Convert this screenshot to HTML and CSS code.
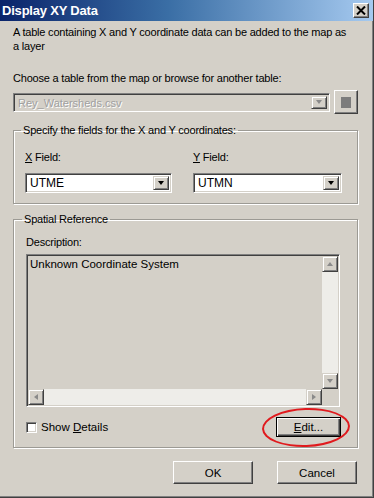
FILE: index.html
```html
<!DOCTYPE html>
<html>
<head>
<meta charset="utf-8">
<link rel="stylesheet" href="styles.css">
</head>
<body>
<div class="window">
  <div class="titlebar">
    <span class="title">Display XY Data</span>
    <span class="close"><svg width="10" height="9" viewBox="0 0 10 9"><path d="M1 0.5 L9 8.5 M9 0.5 L1 8.5" stroke="#000" stroke-width="2"/></svg></span>
  </div>
  <div class="content">
    <p class="intro">A table containing X and Y coordinate data can be added to the map as<br>a layer</p>
    <p class="choose">Choose a table from the map or browse for another table:</p>
    <div class="table-row">
      <div class="combo disabled">
        <span class="combo-text">Rey_Watersheds.csv</span>
        <span class="arrow-btn"><span class="tri-down grey"></span></span>
      </div>
      <div class="browse"><span class="browse-sq"></span></div>
    </div>

    <fieldset class="group fields">
      <legend>Specify the fields for the X and Y coordinates:</legend>
      <div class="field-grid">
        <div class="field-label"><u>X</u> Field:</div>
        <div class="field-label"><u>Y</u> Field:</div>
        <div class="combo">
          <span class="combo-text">UTME</span>
          <span class="arrow-btn"><span class="tri-down"></span></span>
        </div>
        <div class="combo">
          <span class="combo-text">UTMN</span>
          <span class="arrow-btn"><span class="tri-down"></span></span>
        </div>
      </div>
    </fieldset>

    <fieldset class="group spatial">
      <legend>Spatial Reference</legend>
      <div class="desc-label">Description:</div>
      <div class="desc">
        <div class="desc-text">Unknown Coordinate System</div>
        <div class="vscroll">
          <span class="sb-btn"><span class="tri-up grey"></span></span>
          <span class="sb-track"></span>
          <span class="sb-btn"><span class="tri-down grey"></span></span>
        </div>
        <div class="hscroll">
          <span class="sb-btn"><span class="tri-left grey"></span></span>
          <span class="sb-track"></span>
          <span class="sb-btn"><span class="tri-right grey"></span></span>
        </div>
        <div class="corner"></div>
      </div>
      <div class="detail-row">
        <label class="check"><span class="checkbox"></span><span>Show <u>D</u>etails</span></label>
        <div class="edit-wrap">
          <div class="btn default"><u>E</u>dit...</div>
          <span class="ring"></span>
        </div>
      </div>
    </fieldset>

    <div class="footer">
      <div class="btn">OK</div>
      <div class="btn">Cancel</div>
    </div>
  </div>
</div>
</body>
</html>
```

FILE: styles.css
```css
* { box-sizing: border-box; }
html, body { margin: 0; padding: 0; }
body {
  width: 374px;
  height: 498px;
  background: #d4d0c8;
  font-family: "Liberation Sans", Arial, sans-serif;
  font-size: 11px;
  letter-spacing: -0.2px;
  color: #000;
  overflow: hidden;
}
.window {
  width: 374px;
  height: 498px;
  display: flex;
  flex-direction: column;
  border-right: 1px solid #404040;
  border-bottom: 1px solid #404040;
  box-shadow: inset -1px -1px #808080;
}
.titlebar {
  height: 21px;
  flex: none;
  display: flex;
  align-items: center;
  justify-content: space-between;
  padding: 0 4px 0 2px;
  background: linear-gradient(to right, #0a246a 0%, #3a6ea5 45%, #a6caf0 100%);
}
.title {
  color: #fff;
  font-weight: bold;
  font-size: 13px;
  letter-spacing: -0.2px;
}
.close {
  width: 16px;
  height: 15px;
  display: flex;
  align-items: center;
  justify-content: center;
  background: #d4d0c8;
  border-top: 1px solid #fff;
  border-left: 1px solid #fff;
  border-right: 1px solid #404040;
  border-bottom: 1px solid #404040;
  box-shadow: inset -1px -1px #808080;
}
.content {
  flex: 1;
  display: flex;
  flex-direction: column;
  padding: 4px 15px 0 13px;
}
p { margin: 0; line-height: 14px; white-space: nowrap; }
.choose { margin-top: 18px; }
.table-row {
  margin-top: 5px;
  display: flex;
  align-items: center;
  gap: 4px;
}
.table-row .combo { width: 317px; height: 19px; }
.combo {
  height: 20px;
  display: flex;
  align-items: stretch;
  justify-content: space-between;
  background: #fff;
  border-top: 1px solid #808080;
  border-left: 1px solid #808080;
  border-right: 1px solid #fff;
  border-bottom: 1px solid #fff;
  box-shadow: inset 1px 1px #404040, inset -1px -1px #d4d0c8;
  padding: 2px;
}
.combo.disabled { background: #d4d0c8; color: #a0a0a0; }
.combo-text {
  padding-left: 2px;
  line-height: 14px;
  font-size: 12px;
  letter-spacing: 0;
}
.combo.disabled .combo-text { text-shadow: 1px 1px #fff; font-size: 11px; }
.arrow-btn {
  width: 16px;
  display: flex;
  align-items: center;
  justify-content: center;
  background: #d4d0c8;
  border-top: 1px solid #d4d0c8;
  border-left: 1px solid #d4d0c8;
  border-right: 1px solid #404040;
  border-bottom: 1px solid #404040;
  box-shadow: inset 1px 1px #fff, inset -1px -1px #808080;
}
.tri-down, .tri-up, .tri-left, .tri-right { width: 0; height: 0; display: block; }
.tri-down { border-left: 3.5px solid transparent; border-right: 3.5px solid transparent; border-top: 4px solid #000; }
.tri-up { border-left: 3.5px solid transparent; border-right: 3.5px solid transparent; border-bottom: 4px solid #000; }
.tri-left { border-top: 3.5px solid transparent; border-bottom: 3.5px solid transparent; border-right: 4px solid #000; }
.tri-right { border-top: 3.5px solid transparent; border-bottom: 3.5px solid transparent; border-left: 4px solid #000; }
.tri-down.grey { border-top-color: #8a8a8a; }
.tri-up.grey { border-bottom-color: #8a8a8a; }
.tri-left.grey { border-right-color: #8a8a8a; }
.tri-right.grey { border-left-color: #8a8a8a; }
.browse {
  width: 24px;
  height: 24px;
  margin-left: auto;
  display: flex;
  align-items: center;
  justify-content: center;
  background: #d4d0c8;
  border-top: 1px solid #fff;
  border-left: 1px solid #fff;
  border-right: 1px solid #404040;
  border-bottom: 1px solid #404040;
  box-shadow: inset -1px -1px #808080;
}
.browse-sq { width: 10px; height: 11px; background: #7c7c7c; }

.group {
  margin: 0;
  min-width: 0;
  border: 1px solid #9c9a94;
  box-shadow: inset 1px 1px #fff, 1px 1px #fff;
}
.group legend {
  padding: 0 2px;
  margin-left: -4px;
  line-height: 14px;
  font-size: 11px;
}
.fields {
  margin-top: 9px;
  padding: 13px 0 10px 11px;
}
.field-grid {
  display: grid;
  grid-template-columns: 147px 149px;
  column-gap: 21px;
  row-gap: 9px;
}
.field-label { line-height: 14px; }
.spatial {
  margin-top: 8px;
  padding: 9px 0 10px 12px;
}
.desc-label { line-height: 14px; }
.desc {
  margin-top: 5px;
  width: 314px;
  height: 153px;
  display: grid;
  grid-template-columns: 1fr 16px;
  grid-template-rows: 1fr 16px;
  background: #d4d0c8;
  border-top: 1px solid #808080;
  border-left: 1px solid #808080;
  border-right: 1px solid #fff;
  border-bottom: 1px solid #fff;
  box-shadow: inset 1px 1px #404040, inset -1px -1px #d4d0c8;
  padding: 1px 1px 1px 1px;
}
.desc-text {
  padding: 1px 2px;
  line-height: 14px;
  font-size: 11.5px;
  letter-spacing: 0;
}
.vscroll {
  display: flex;
  flex-direction: column;
  background: #eeede9;
}
.hscroll {
  display: flex;
  background: #eeede9;
}
.sb-track { flex: 1; }
.sb-btn {
  width: 16px;
  height: 16px;
  flex: none;
  display: flex;
  align-items: center;
  justify-content: center;
  background: #d4d0c8;
  border-top: 1px solid #d4d0c8;
  border-left: 1px solid #d4d0c8;
  border-right: 1px solid #404040;
  border-bottom: 1px solid #404040;
  box-shadow: inset 1px 1px #fff, inset -1px -1px #808080;
}
.corner { background: #d4d0c8; }
.detail-row {
  margin-top: 10px;
  width: 315px;
  display: flex;
  align-items: center;
  justify-content: space-between;
}
.check { display: flex; align-items: center; gap: 4px; line-height: 14px; font-size: 11.5px; letter-spacing: 0; }
.checkbox {
  width: 11px;
  height: 11px;
  background: #fff;
  border-top: 1px solid #808080;
  border-left: 1px solid #808080;
  border-right: 1px solid #fff;
  border-bottom: 1px solid #fff;
  box-shadow: inset 1px 1px #404040, inset -1px -1px #d4d0c8;
}
.edit-wrap { position: relative; }
.btn {
  display: flex;
  align-items: center;
  justify-content: center;
  background: #d4d0c8;
  border-top: 1px solid #fff;
  border-left: 1px solid #fff;
  border-right: 1px solid #404040;
  border-bottom: 1px solid #404040;
  box-shadow: inset -1px -1px #808080;
  font-size: 11.5px;
  letter-spacing: 0;
}
.btn.default {
  width: 65px;
  height: 20px;
  border: 1px solid #000;
  box-shadow: inset 1px 1px #fff, inset -1px -1px #404040, inset -2px -2px #808080;
}
.ring {
  position: absolute;
  left: -14px;
  top: -9px;
  width: 88px;
  height: 39px;
  border: 2.5px solid #e01a1e;
  border-radius: 50%;
  transform: rotate(-2deg);
}
.footer {
  margin-top: 13px;
  display: flex;
  justify-content: flex-end;
  gap: 24px;
  padding-right: 1px;
}
.footer .btn { width: 80px; height: 23px; }
```
